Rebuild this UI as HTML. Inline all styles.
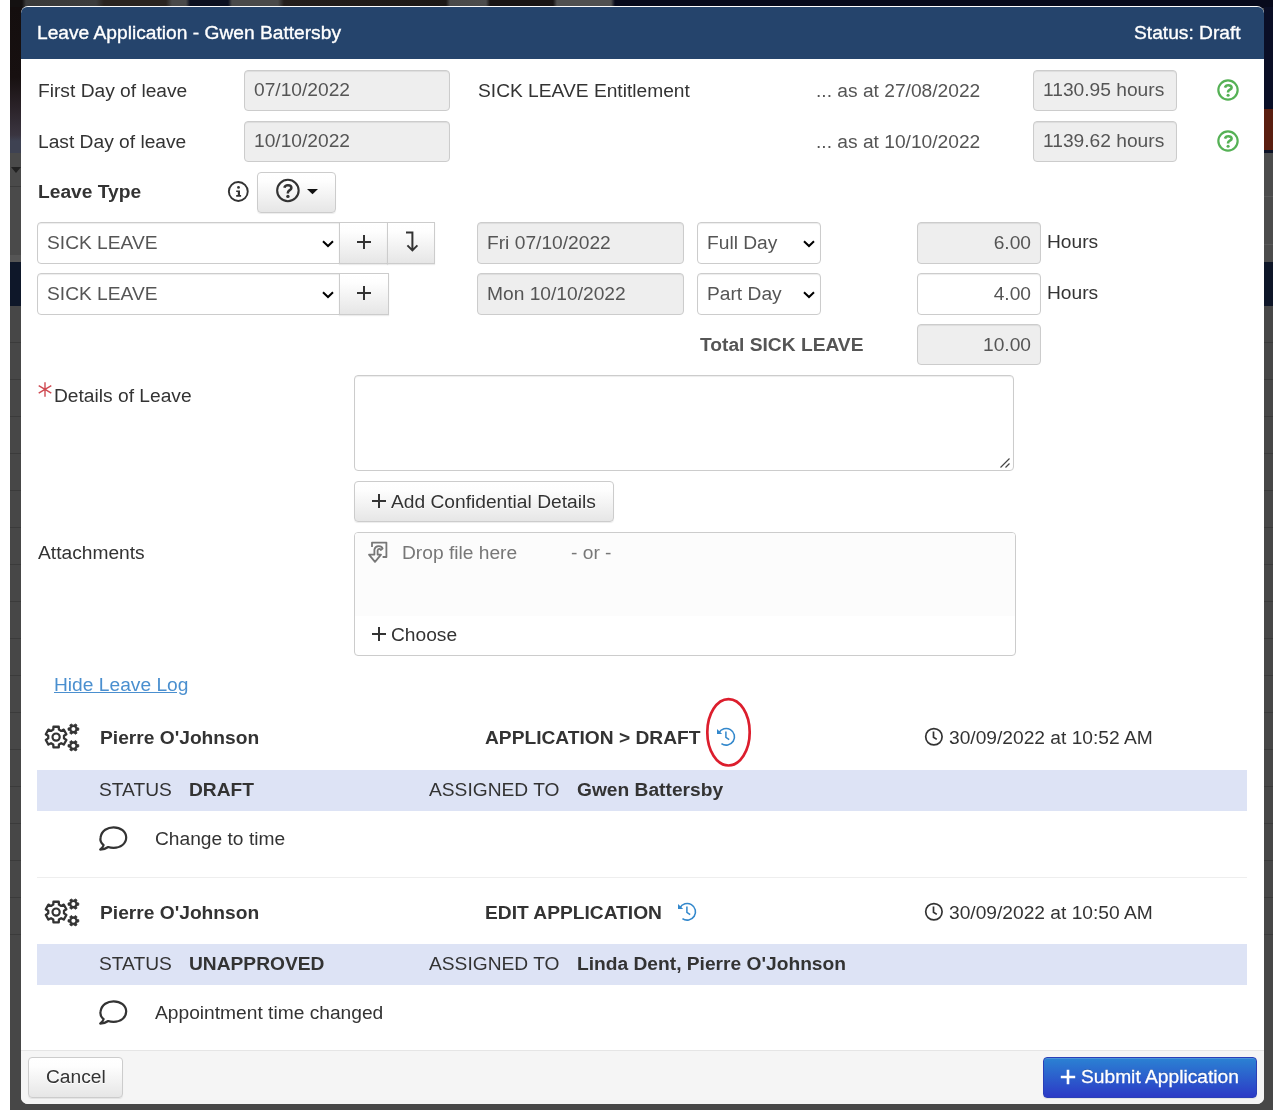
<!DOCTYPE html>
<html lang="en">
<head>
<meta charset="utf-8">
<title>Leave Application - Gwen Battersby</title>
<style>
*{box-sizing:border-box;margin:0;padding:0}
html,body{width:1282px;height:1115px;overflow:hidden;background:#fff}
body{position:relative;font-family:"Liberation Sans",Arial,Helvetica,sans-serif;font-size:19.2px;color:#333;line-height:22px}
.abs,.t,.in,.btn,.sel{position:absolute}
.t{white-space:nowrap;height:22px;line-height:22px}
.t,.in,.sel,.btn,.in span,.sel span{will-change:transform}
.b{font-weight:bold}
.hd{-webkit-text-stroke:0.35px #fff}
.ic{will-change:transform}
.g{color:#555}
#backdrop{left:10px;top:0;width:1263px;height:1110px;background:#474747;overflow:hidden}
#bglines{left:0;top:306px;width:1263px;height:632px;background:repeating-linear-gradient(#474747 0,#474747 36px,#3b3b3b 36px,#3b3b3b 37px)}
#modal{left:21px;top:6px;width:1243px;height:1098px;background:#fff;border-radius:7px;overflow:hidden}
#hdr{left:0;top:1px;width:1243px;height:52px;background:#25446c;border-radius:6px 6px 0 0}
#ftr{left:0;top:1044px;width:1243px;height:54px;background:#f5f5f5;border-top:1px solid #e5e5e5}
.in{border:1px solid #ccc;border-radius:4px;background:#eee;color:#555;box-shadow:inset 0 1px 1px rgba(0,0,0,.075);white-space:nowrap;padding:0 9px;line-height:22px}
.in span{position:absolute;left:9px;right:9px}
.in.r span{text-align:right}
.in.w{background:#fff}
.sel{border:1px solid #ccc;border-radius:4px;background:#fff;color:#555;box-shadow:inset 0 1px 1px rgba(0,0,0,.075);white-space:nowrap}
.sel span{position:absolute;left:9px}
.sel svg{position:absolute}
.btn{border:1px solid #ccc;border-radius:4px;background:linear-gradient(#fff 0%,#fefefe 20%,#e6e6e6 100%);box-shadow:inset 0 1px 0 rgba(255,255,255,.15),0 1px 1px rgba(0,0,0,.075);text-shadow:0 1px 0 #fff;color:#333;white-space:nowrap}
.btn svg,.abs svg{position:absolute;overflow:visible}
button.btn{font:inherit;padding:0;margin:0;display:block;text-align:left;outline:0;appearance:none;-webkit-appearance:none}
label.t,a.t{display:block}
.band{position:absolute;left:37px;width:1210px;background:#dde3f5}
svg{display:block}
#submit .t{-webkit-text-stroke:0.3px #fff}
#submit{background:linear-gradient(#2b82d3 0%,#2c3ac6 100%);border-color:#2a3fb8;color:#fff;text-shadow:0 -1px 0 rgba(0,0,0,.2)}
#bgtop{left:0;top:0;width:1263px;height:8px;background:linear-gradient(90deg,#141111 0,#141111 12px,#3a3a3a 16px,#3c3c3c 86px,#2a2420 94px,#2a2420 156px,#4a4a4a 162px,#4a4a4a 176px,#0c1020 180px,#0c1020 218px,#4a4a4a 222px,#4a4a4a 268px,#241e1c 274px,#1c1816 436px,#4a4a4a 440px,#4c4c4c 476px,#181414 480px,#181414 543px,#505050 547px,#505050 601px,#070a1c 605px,#070a1c 1263px)}
#bgleft{left:0;top:7px;width:12px;height:299px;background:linear-gradient(#140e0e 0,#171010 70px,#2a2228 100px,#3a3540 128px,#3e4252 134px,#3e4252 146px,#4a4a4a 146px,#4a4a4a 179px,#3c3c3c 179px,#3c3c3c 180px,#4a4a4a 180px,#4a4a4a 248px,#555 248px,#555 255px,#0e1729 255px,#0e1729 299px)}
#bgright{left:1254px;top:7px;width:9px;height:299px;background:linear-gradient(#0a0e26 0,#0a0e26 102px,#5a1e10 102px,#5a1e10 143px,#0e1326 143px,#0e1326 146px,#4c4c4c 146px,#4c4c4c 189px,#585858 189px,#585858 190px,#4c4c4c 190px,#4c4c4c 237px,#585858 237px,#585858 238px,#4c4c4c 238px,#4c4c4c 255px,#0e1628 255px,#0e1628 299px)}
</style>
</head>
<body>
<div id="backdrop" class="abs">
  <div class="abs" id="bglines"></div>
  <div class="abs" id="bgtop"></div>
  <div class="abs" id="bgleft"></div>
  <div class="abs" style="left:1px;top:167px;width:0;height:0;border-left:5px solid transparent;border-right:5px solid transparent;border-top:6px solid #222"></div>
  <div class="abs" id="bgright"></div>
</div>
<div id="modal" class="abs">
  <div id="hdr" class="abs"></div>
  <div id="ftr" class="abs"></div>
</div>

<!-- header -->
<div class="t hd" style="left:37px;top:22px;color:#fff">Leave Application - Gwen Battersby</div>
<div class="t hd" style="right:41px;top:22px;color:#fff">Status: Draft</div>

<!-- row 1 / 2 -->
<label class="t" style="left:37.5px;top:80px">First Day of leave</label>
<div class="in" style="left:244px;top:70px;width:206px;height:41px"><span style="top:8px">07/10/2022</span></div>
<div class="t" style="left:477.5px;top:80px">SICK LEAVE Entitlement</div>
<div class="t g" style="left:816px;top:80px">... as at 27/08/2022</div>
<div class="in" style="left:1033px;top:70px;width:144px;height:41px"><span style="top:8px">1130.95 hours</span></div>
<div class="abs ic" style="left:1216.3px;top:77.5px;width:24px;height:24px"><svg width="24" height="24" viewBox="0 0 24 24"><circle cx="12" cy="12" r="9.65" fill="none" stroke="#55b155" stroke-width="2.2"/><g transform="translate(12 12)"><path d="M-3.0 -2.4 C-2.6 -4.0 -1.2 -4.8 0.4 -4.8 C2.2 -4.8 3.6 -3.8 3.6 -2.3 C3.6 -0.3 0.1 -0.3 0.1 1.8 V2.5" fill="none" stroke="#55b155" stroke-width="2.6"/><circle cx="0.1" cy="5.3" r="1.55" fill="#55b155"/></g></svg></div>

<label class="t" style="left:37.5px;top:131px">Last Day of leave</label>
<div class="in" style="left:244px;top:121px;width:206px;height:41px"><span style="top:8px">10/10/2022</span></div>
<div class="t g" style="left:816px;top:131px">... as at 10/10/2022</div>
<div class="in" style="left:1033px;top:121px;width:144px;height:41px"><span style="top:8px">1139.62 hours</span></div>
<div class="abs ic" style="left:1216.3px;top:128.5px;width:24px;height:24px"><svg width="24" height="24" viewBox="0 0 24 24"><circle cx="12" cy="12" r="9.65" fill="none" stroke="#55b155" stroke-width="2.2"/><g transform="translate(12 12)"><path d="M-3.0 -2.4 C-2.6 -4.0 -1.2 -4.8 0.4 -4.8 C2.2 -4.8 3.6 -3.8 3.6 -2.3 C3.6 -0.3 0.1 -0.3 0.1 1.8 V2.5" fill="none" stroke="#55b155" stroke-width="2.6"/><circle cx="0.1" cy="5.3" r="1.55" fill="#55b155"/></g></svg></div>

<!-- leave type -->
<label class="t b" style="left:38px;top:181px">Leave Type</label>
<div class="abs ic" style="left:227px;top:180px;width:24px;height:24px"><svg width="24" height="24" viewBox="0 0 24 24"><circle cx="11.3" cy="11.5" r="9.45" fill="none" stroke="#333" stroke-width="1.9"/><circle cx="11.5" cy="7.4" r="1.4" fill="#333"/><path d="M9.2 10.5 H13 V15.1 H14.1 V16.7 H9.2 V15.1 H10.8 V12 H9.2 Z" fill="#333"/></svg></div>
<button type="button" class="btn" style="left:257px;top:172px;width:79px;height:41px">
  <svg width="79" height="41" viewBox="0 0 79 41" style="left:-1px;top:-1px"><circle cx="30.9" cy="18.5" r="10.75" fill="none" stroke="#333" stroke-width="2.1"/><g transform="translate(30.9 18.5)"><path d="M-3.5 -2.8 C-3.2 -4.4 -1.7 -5.3 0.1 -5.3 C2.1 -5.3 3.5 -4.2 3.5 -2.6 C3.5 -0.4 0 -0.3 0 2.0 V3.1" fill="none" stroke="#333" stroke-width="2.5"/><circle cx="0" cy="5.9" r="1.7" fill="#333"/></g><path d="M50 17 L61 17 L55.5 22.2 Z" fill="#111"/></svg>
</button>

<!-- leave rows -->
<div class="sel" style="left:37px;top:222px;width:303px;height:42px;border-radius:4px 0 0 4px"><span style="top:9px;left:9px">SICK LEAVE</span><svg width="12" height="8" viewBox="0 0 12 8" style="left:284px;top:17px"><path d="M1 1.2 L6 6 L11 1.2" fill="none" stroke="#000" stroke-width="2"/></svg></div>
<button type="button" class="btn" style="left:339px;top:222px;width:49px;height:42px;border-radius:0"><svg width="16" height="16" viewBox="0 0 16 16" style="left:16px;top:11px"><path d="M8 1 V15 M1 8 H15" fill="none" stroke="#333" stroke-width="2"/></svg></button>
<button type="button" class="btn" style="left:387px;top:222px;width:48px;height:42px;border-radius:0"><svg width="14" height="20" viewBox="0 0 14 20" style="left:17px;top:9px"><path d="M1 0.6 H7.4 V18 M2.4 13.4 L7.4 18.4 L12.4 13.4" fill="none" stroke="#333" stroke-width="2"/></svg></button>
<div class="in" style="left:477px;top:222px;width:207px;height:42px"><span style="top:9px">Fri 07/10/2022</span></div>
<div class="sel" style="left:697px;top:222px;width:124px;height:42px"><span style="top:9px;left:9px">Full Day</span><svg width="12" height="8" viewBox="0 0 12 8" style="left:104.5px;top:16.5px"><path d="M1 1.2 L6 6 L11 1.2" fill="none" stroke="#000" stroke-width="2"/></svg></div>
<div class="in r" style="left:917px;top:222px;width:124px;height:42px"><span style="top:9px">6.00</span></div>
<div class="t" style="left:1046.5px;top:231px">Hours</div>

<div class="sel" style="left:37px;top:273px;width:303px;height:42px;border-radius:4px 0 0 4px"><span style="top:9px;left:9px">SICK LEAVE</span><svg width="12" height="8" viewBox="0 0 12 8" style="left:284px;top:17px"><path d="M1 1.2 L6 6 L11 1.2" fill="none" stroke="#000" stroke-width="2"/></svg></div>
<button type="button" class="btn" style="left:339px;top:273px;width:50px;height:42px;border-radius:0"><svg width="16" height="16" viewBox="0 0 16 16" style="left:16px;top:11px"><path d="M8 1 V15 M1 8 H15" fill="none" stroke="#333" stroke-width="2"/></svg></button>
<div class="in" style="left:477px;top:273px;width:207px;height:42px"><span style="top:9px">Mon 10/10/2022</span></div>
<div class="sel" style="left:697px;top:273px;width:124px;height:42px"><span style="top:9px;left:9px">Part Day</span><svg width="12" height="8" viewBox="0 0 12 8" style="left:104.5px;top:16.5px"><path d="M1 1.2 L6 6 L11 1.2" fill="none" stroke="#000" stroke-width="2"/></svg></div>
<div class="in r w" style="left:917px;top:273px;width:124px;height:42px"><span style="top:9px">4.00</span></div>
<div class="t" style="left:1046.5px;top:282px">Hours</div>

<label class="t b g" style="left:700px;top:334px">Total SICK LEAVE</label>
<div class="in r" style="left:917px;top:324px;width:124px;height:41px"><span style="top:9px">10.00</span></div>

<!-- details -->
<div class="abs" style="left:37px;top:381px;width:16px;height:17px"><svg width="16" height="17" viewBox="0 0 16 17"><path d="M8 1.2 V15.8 M1.7 4.7 L14.3 12.2 M14.3 4.7 L1.7 12.2" fill="none" stroke="#cf4a52" stroke-width="1.4"/></svg></div>
<label class="t" style="left:54px;top:385px">Details of Leave</label>
<div class="sel" style="left:354px;top:375px;width:660px;height:96px"><svg width="12" height="12" viewBox="0 0 12 12" style="left:644px;top:81px"><path d="M1.5 10.5 L10.5 1.5 M6.5 10.5 L10.5 6.5" fill="none" stroke="#444" stroke-width="1.2"/></svg></div>
<button type="button" class="btn" style="left:354px;top:481px;width:260px;height:41px"><svg width="16" height="16" viewBox="0 0 16 16" style="left:16px;top:11px"><path d="M8 1 V15 M1 8 H15" fill="none" stroke="#333" stroke-width="2"/></svg><span class="t" style="position:absolute;left:35.5px;top:8.5px">Add Confidential Details</span></button>

<!-- attachments -->
<label class="t" style="left:37.5px;top:542px">Attachments</label>
<div class="abs" style="left:354px;top:532px;width:662px;height:124px;border:1px solid #ccc;border-radius:4px;background:#fff;overflow:hidden">
  <div class="abs" style="left:0;top:0;width:660px;height:83px;background:#fcfcfc"></div>
</div>
<div class="abs" style="left:367px;top:540px;width:22px;height:24px"><svg width="22" height="24" viewBox="0 0 22 24"><path d="M5 7 V2.6 H19.4 V17 H15.6" fill="none" stroke="#777" stroke-width="1.8" stroke-linejoin="round"/><path d="M15.6 8.6 C14.6 5.2 8.6 5 7.4 9.4 V14.6 H2 L8 21.8 L14 14.6 H10.6 V10.6 C11 8.6 13.2 8.4 13.8 10 Z" fill="none" stroke="#777" stroke-width="1.8" stroke-linejoin="round"/></svg></div>
<div class="t" style="left:401.5px;top:542px;color:#777">Drop file here</div>
<div class="t" style="left:570.5px;top:542px;color:#777">- or -</div>
<div class="abs" style="left:370.7px;top:626px;width:16px;height:16px"><svg width="16" height="16" viewBox="0 0 16 16"><path d="M8 1 V15 M1 8 H15" fill="none" stroke="#333" stroke-width="2"/></svg></div>
<div class="t" style="left:390.7px;top:623.5px">Choose</div>

<a class="t" style="left:54px;top:674px;color:#4a8fcf;text-decoration:underline">Hide Leave Log</a>

<!-- log 1 -->
<div class="abs cogs" style="left:44px;top:723px;width:36px;height:29px"><svg width="36" height="29" viewBox="0 0 36 29"><path d="M9.28 6.61 L9.45 3.73 L14.75 3.73 L14.92 6.61 L17.17 7.92 L19.75 6.62 L22.40 11.21 L19.99 12.80 L19.99 15.40 L22.40 16.99 L19.75 21.58 L17.17 20.28 L14.92 21.59 L14.75 24.47 L9.45 24.47 L9.28 21.59 L7.03 20.28 L4.45 21.58 L1.80 16.99 L4.21 15.40 L4.21 12.80 L1.80 11.21 L4.45 6.62 L7.03 7.92 Z" fill="none" stroke="#333" stroke-width="2.3" stroke-linejoin="round"/><circle cx="12.1" cy="14.1" r="3.6" fill="none" stroke="#333" stroke-width="2.2"/><path d="M30.05 2.15 L31.15 0.89 L33.04 1.98 L32.49 3.56 L33.14 4.69 L34.79 5.01 L34.79 7.19 L33.14 7.51 L32.49 8.64 L33.04 10.22 L31.15 11.31 L30.05 10.05 L28.75 10.05 L27.65 11.31 L25.76 10.22 L26.31 8.64 L25.66 7.51 L24.01 7.19 L24.01 5.01 L25.66 4.69 L26.31 3.56 L25.76 1.98 L27.65 0.89 L28.75 2.15 Z" fill="#333" stroke="#333" stroke-width="0.8" stroke-linejoin="round"/><circle cx="29.4" cy="6.1" r="2.0" fill="#fff"/><path d="M30.05 18.85 L31.15 17.59 L33.04 18.68 L32.49 20.26 L33.14 21.39 L34.79 21.71 L34.79 23.89 L33.14 24.21 L32.49 25.34 L33.04 26.92 L31.15 28.01 L30.05 26.75 L28.75 26.75 L27.65 28.01 L25.76 26.92 L26.31 25.34 L25.66 24.21 L24.01 23.89 L24.01 21.71 L25.66 21.39 L26.31 20.26 L25.76 18.68 L27.65 17.59 L28.75 18.85 Z" fill="#333" stroke="#333" stroke-width="0.8" stroke-linejoin="round"/><circle cx="29.4" cy="22.8" r="2.0" fill="#fff"/></svg></div>
<div class="t b" style="left:100px;top:727px">Pierre O'Johnson</div>
<div class="t b" style="left:485px;top:727px">APPLICATION &gt; DRAFT</div>
<div class="abs hist" style="left:716px;top:727px;width:20px;height:20px"><svg width="20" height="20" viewBox="0 0 20 20"><path d="M2.87 5.90 A8.3 8.3 0 1 1 5.44 16.60" fill="none" stroke="#3388cc" stroke-width="1.6"/><path d="M1.0 1.9 L1.0 7.0 L6.2 7.0 Z" fill="#3388cc"/><path d="M9.9 4.6 V10.4 L13.2 12.6" fill="none" stroke="#3388cc" stroke-width="1.5"/></svg></div>
<div class="abs" style="left:704px;top:696px;width:50px;height:73px"><svg width="50" height="73" viewBox="0 0 50 73"><ellipse cx="24.5" cy="36.3" rx="21.2" ry="33.2" fill="none" stroke="#dc1e2d" stroke-width="2.7"/></svg></div>
<div class="abs clock" style="left:924px;top:727px;width:20px;height:20px"><svg width="20" height="20" viewBox="0 0 20 20"><circle cx="9.9" cy="9.75" r="8.2" fill="none" stroke="#333" stroke-width="1.7"/><path d="M9.5 4.6 V10.2 L12.8 12.4" fill="none" stroke="#333" stroke-width="1.7"/></svg></div>
<div class="t" style="left:948.5px;top:727px">30/09/2022 at 10:52 AM</div>
<div class="band" style="top:770px;height:41px"></div>
<div class="t" style="left:99px;top:779px">STATUS</div>
<div class="t b" style="left:189px;top:779px">DRAFT</div>
<div class="t" style="left:429px;top:779px">ASSIGNED TO</div>
<div class="t b" style="left:577px;top:779px">Gwen Battersby</div>
<div class="abs cmt" style="left:99px;top:825px;width:30px;height:27px"><svg width="30" height="27" viewBox="0 0 30 27"><path d="M4.6 20.2 C1.6 17.6 1.2 14 1.6 12.2 C2.6 5.6 8.6 2.3 14.6 2.3 C21.6 2.3 27.2 6.6 27.2 12.6 C27.2 18.6 21.6 22.9 14.6 22.9 C12.6 22.9 10.8 22.6 9.2 22 C7 23.6 4.2 24.6 1.2 24.6 C3 23 4.2 21.6 4.6 20.2 Z" fill="none" stroke="#333" stroke-width="2.2" stroke-linejoin="round"/></svg></div>
<div class="t" style="left:154.5px;top:827.5px">Change to time</div>
<div class="abs" style="left:37px;top:877px;width:1210px;height:1px;background:#eee"></div>

<!-- log 2 -->
<div class="abs cogs" style="left:44px;top:898px;width:36px;height:29px"><svg width="36" height="29" viewBox="0 0 36 29"><path d="M9.28 6.61 L9.45 3.73 L14.75 3.73 L14.92 6.61 L17.17 7.92 L19.75 6.62 L22.40 11.21 L19.99 12.80 L19.99 15.40 L22.40 16.99 L19.75 21.58 L17.17 20.28 L14.92 21.59 L14.75 24.47 L9.45 24.47 L9.28 21.59 L7.03 20.28 L4.45 21.58 L1.80 16.99 L4.21 15.40 L4.21 12.80 L1.80 11.21 L4.45 6.62 L7.03 7.92 Z" fill="none" stroke="#333" stroke-width="2.3" stroke-linejoin="round"/><circle cx="12.1" cy="14.1" r="3.6" fill="none" stroke="#333" stroke-width="2.2"/><path d="M30.05 2.15 L31.15 0.89 L33.04 1.98 L32.49 3.56 L33.14 4.69 L34.79 5.01 L34.79 7.19 L33.14 7.51 L32.49 8.64 L33.04 10.22 L31.15 11.31 L30.05 10.05 L28.75 10.05 L27.65 11.31 L25.76 10.22 L26.31 8.64 L25.66 7.51 L24.01 7.19 L24.01 5.01 L25.66 4.69 L26.31 3.56 L25.76 1.98 L27.65 0.89 L28.75 2.15 Z" fill="#333" stroke="#333" stroke-width="0.8" stroke-linejoin="round"/><circle cx="29.4" cy="6.1" r="2.0" fill="#fff"/><path d="M30.05 18.85 L31.15 17.59 L33.04 18.68 L32.49 20.26 L33.14 21.39 L34.79 21.71 L34.79 23.89 L33.14 24.21 L32.49 25.34 L33.04 26.92 L31.15 28.01 L30.05 26.75 L28.75 26.75 L27.65 28.01 L25.76 26.92 L26.31 25.34 L25.66 24.21 L24.01 23.89 L24.01 21.71 L25.66 21.39 L26.31 20.26 L25.76 18.68 L27.65 17.59 L28.75 18.85 Z" fill="#333" stroke="#333" stroke-width="0.8" stroke-linejoin="round"/><circle cx="29.4" cy="22.8" r="2.0" fill="#fff"/></svg></div>
<div class="t b" style="left:100px;top:902px">Pierre O'Johnson</div>
<div class="t b" style="left:485px;top:902px">EDIT APPLICATION</div>
<div class="abs hist" style="left:677px;top:902px;width:20px;height:20px"><svg width="20" height="20" viewBox="0 0 20 20"><path d="M2.87 5.90 A8.3 8.3 0 1 1 5.44 16.60" fill="none" stroke="#3388cc" stroke-width="1.6"/><path d="M1.0 1.9 L1.0 7.0 L6.2 7.0 Z" fill="#3388cc"/><path d="M9.9 4.6 V10.4 L13.2 12.6" fill="none" stroke="#3388cc" stroke-width="1.5"/></svg></div>
<div class="abs clock" style="left:924px;top:902px;width:20px;height:20px"><svg width="20" height="20" viewBox="0 0 20 20"><circle cx="9.9" cy="9.75" r="8.2" fill="none" stroke="#333" stroke-width="1.7"/><path d="M9.5 4.6 V10.2 L12.8 12.4" fill="none" stroke="#333" stroke-width="1.7"/></svg></div>
<div class="t" style="left:948.5px;top:902px">30/09/2022 at 10:50 AM</div>
<div class="band" style="top:944px;height:41px"></div>
<div class="t" style="left:99px;top:953px">STATUS</div>
<div class="t b" style="left:189px;top:953px">UNAPPROVED</div>
<div class="t" style="left:429px;top:953px">ASSIGNED TO</div>
<div class="t b" style="left:577px;top:953px">Linda Dent, Pierre O'Johnson</div>
<div class="abs cmt" style="left:99px;top:999px;width:30px;height:27px"><svg width="30" height="27" viewBox="0 0 30 27"><path d="M4.6 20.2 C1.6 17.6 1.2 14 1.6 12.2 C2.6 5.6 8.6 2.3 14.6 2.3 C21.6 2.3 27.2 6.6 27.2 12.6 C27.2 18.6 21.6 22.9 14.6 22.9 C12.6 22.9 10.8 22.6 9.2 22 C7 23.6 4.2 24.6 1.2 24.6 C3 23 4.2 21.6 4.6 20.2 Z" fill="none" stroke="#333" stroke-width="2.2" stroke-linejoin="round"/></svg></div>
<div class="t" style="left:154.5px;top:1001.5px">Appointment time changed</div>

<!-- footer -->
<button type="button" class="btn" style="left:28px;top:1057px;width:95px;height:41px"><span class="t" style="position:absolute;left:17px;top:8px">Cancel</span></button>
<button type="button" class="btn" id="submit" style="left:1043px;top:1057px;width:214px;height:41px"><svg width="16" height="16" viewBox="0 0 16 16" style="left:16.3px;top:10.5px"><path d="M8 0.8 V15.2 M0.8 8 H15.2" fill="none" stroke="#fff" stroke-width="2.6"/></svg><span class="t" style="position:absolute;left:37px;top:8px">Submit Application</span></button>
</body>
</html>
